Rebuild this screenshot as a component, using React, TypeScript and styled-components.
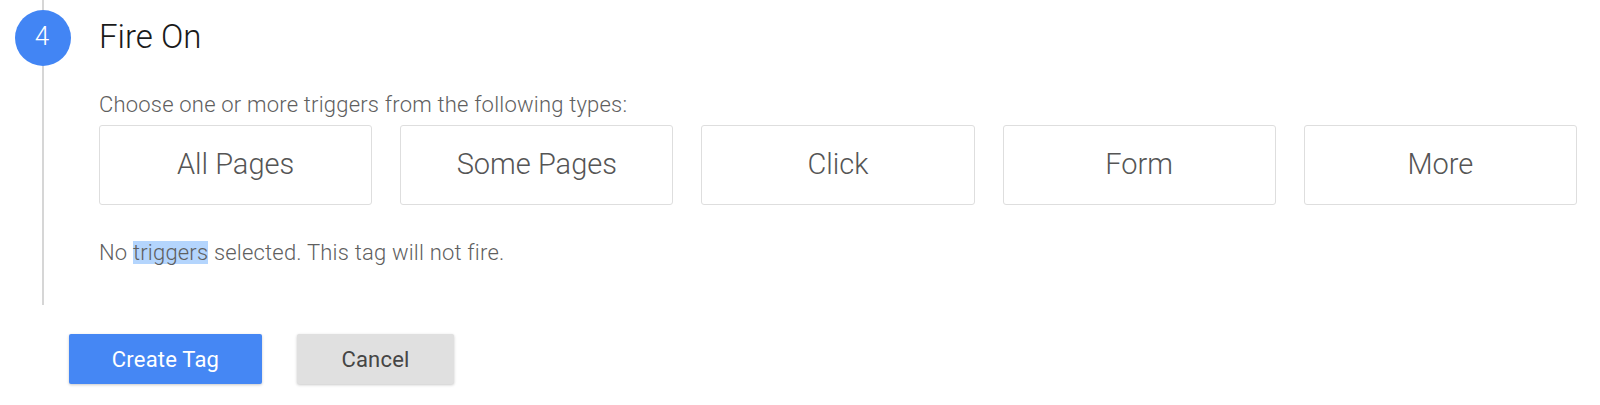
import React from "react";
import styled, { createGlobalStyle } from "styled-components";

const Global = createGlobalStyle`
  html, body { margin: 0; padding: 0; background: #ffffff; }
  body { font-family: Roboto, "Liberation Sans", Arial, sans-serif; }
  * { box-sizing: border-box; }
`;

const Page = styled.div`
  width: 1600px;
  height: 405px;
  background: #fff;
  display: flex;
  flex-direction: column;
`;

const Step = styled.section`
  display: grid;
  grid-template-columns: 56px 1fr;
  column-gap: 28px;
  padding-left: 15px;
  padding-right: 23px;
  height: 305px;
`;

const Rail = styled.div`
  display: flex;
  flex-direction: column;
  align-items: center;
`;

const RailLine = styled.div<{ $h?: number }>`
  width: 2px;
  margin-left: -1px;
  background: #d6d6d6;
  ${(p) => (p.$h !== undefined ? `height: ${p.$h}px;` : "flex: 1;")}
`;

const StepCircle = styled.div`
  width: 56px;
  height: 56px;
  border-radius: 50%;
  background: #4285f4;
  color: #fff;
  display: flex;
  align-items: center;
  justify-content: center;
  font-size: 26px;
  font-weight: 300;
  padding-bottom: 5px;
  padding-right: 2px;
  flex-shrink: 0;
`;

const Content = styled.div`
  display: flex;
  flex-direction: column;
  padding-top: 18px;
`;

const Title = styled.h2`
  margin: 0 0 36px 0;
  font-size: 33px;
  line-height: 38px;
  font-weight: 300;
  color: #1a1a1a;
`;

const Hint = styled.p`
  margin: 0 0 7px 0;
  font-size: 22px;
  line-height: 26px;
  font-weight: 300;
  letter-spacing: 0.2px;
  color: #5f5f5f;
`;

const TriggerGrid = styled.div`
  display: grid;
  grid-template-columns: repeat(5, 1fr);
  column-gap: 28px;
`;

const TriggerCard = styled.button`
  height: 80px;
  border: 1px solid #dedede;
  border-radius: 3px;
  background: #fff;
  font-family: Roboto, "Liberation Sans", Arial, sans-serif;
  font-size: 29px;
  font-weight: 300;
  color: #555;
  display: flex;
  align-items: center;
  justify-content: center;
  padding: 0 0 2px 0;
  cursor: pointer;
`;

const Status = styled.p`
  margin: 35px 0 0 0;
  font-size: 22px;
  line-height: 26px;
  font-weight: 300;
  letter-spacing: 0.2px;
  color: #5f5f5f;
`;

const Highlight = styled.span`
  display: inline-block;
  background: #b4d5fd;
  line-height: 23px;
  height: 23px;
`;

const Actions = styled.div`
  display: flex;
  gap: 35px;
  padding-left: 69px;
  margin-top: 29px;
`;

const ActionButton = styled.button<{ $primary?: boolean; $w: number }>`
  width: ${(p) => p.$w}px;
  height: 50px;
  border: none;
  border-radius: 2px;
  font-family: Roboto, "Liberation Sans", Arial, sans-serif;
  font-size: 22px;
  font-weight: 400;
  letter-spacing: 0.2px;
  background: ${(p) => (p.$primary ? "#4587f4" : "#e0e0e0")};
  color: ${(p) => (p.$primary ? "#fff" : "#454545")};
  box-shadow: 0 1px 3px rgba(0, 0, 0, 0.22);
  cursor: pointer;
`;

const triggers = ["All Pages", "Some Pages", "Click", "Form", "More"];

export default function App() {
  return (
    <Page>
      <Global />
      <Step>
        <Rail>
          <RailLine $h={10} />
          <StepCircle>4</StepCircle>
          <RailLine />
        </Rail>
        <Content>
          <Title>Fire On</Title>
          <Hint>Choose one or more triggers from the following types:</Hint>
          <TriggerGrid>
            {triggers.map((t) => (
              <TriggerCard key={t}>{t}</TriggerCard>
            ))}
          </TriggerGrid>
          <Status>
            No <Highlight>triggers</Highlight> selected. This tag will not fire.
          </Status>
        </Content>
      </Step>
      <Actions>
        <ActionButton $primary $w={193}>Create Tag</ActionButton>
        <ActionButton $w={157}>Cancel</ActionButton>
      </Actions>
    </Page>
  );
}
